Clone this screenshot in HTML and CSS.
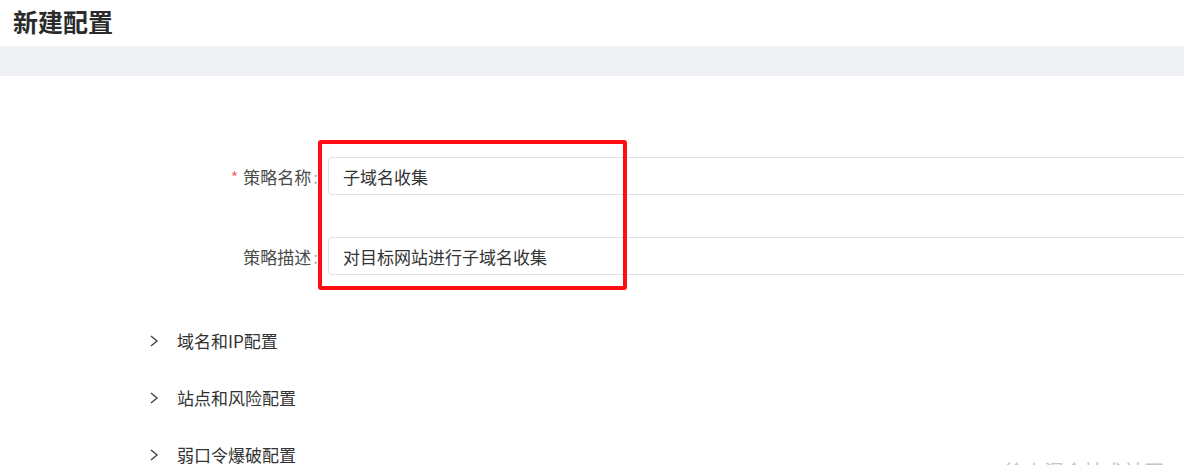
FILE: index.html
```html
<!DOCTYPE html>
<html lang="zh-CN">
<head>
<meta charset="utf-8">
<title>新建配置</title>
<link rel="stylesheet" href="styles.css">
</head>
<body>
<div class="page">
  <header class="header"><h1 class="title">新建配置</h1></header>
  <div class="band"></div>
  <main class="form">
    <div class="row">
      <label class="label"><span class="req">*</span>策略名称<span class="colon">:</span></label>
      <div class="input">子域名收集</div>
    </div>
    <div class="row row-2">
      <label class="label">策略描述<span class="colon">:</span></label>
      <div class="input">对目标网站进行子域名收集</div>
    </div>
    <div class="highlight"></div>
    <ul class="collapse">
      <li class="item"><svg class="chev" width="10" height="14" viewBox="0 0 10 14"><path d="M2 2 L8 7 L2 12" fill="none" stroke="#444" stroke-width="1.4"/></svg><span>域名和IP配置</span></li>
      <li class="item"><svg class="chev" width="10" height="14" viewBox="0 0 10 14"><path d="M2 2 L8 7 L2 12" fill="none" stroke="#444" stroke-width="1.4"/></svg><span>站点和风险配置</span></li>
      <li class="item"><svg class="chev" width="10" height="14" viewBox="0 0 10 14"><path d="M2 2 L8 7 L2 12" fill="none" stroke="#444" stroke-width="1.4"/></svg><span>弱口令爆破配置</span></li>
    </ul>
    <div class="watermark">@徐小湿会技术社区</div>
  </main>
</div>
</body>
</html>
```

FILE: styles.css
```css
html, body {
  margin: 0;
  padding: 0;
  background: #fff;
}
body {
  width: 1184px;
  height: 465px;
  overflow: hidden;
  font-family: "Noto Sans CJK SC", "Liberation Sans", sans-serif;
}
.page {
  width: 1184px;
  height: 465px;
  overflow: hidden;
}
.header {
  height: 46px;
  padding-left: 13px;
}
.title {
  margin: 0;
  font-size: 25px;
  line-height: 42px;
  font-weight: 700;
  color: #2b2b2b;
}
.band {
  height: 30px;
  background: #f0f1f4;
}
.form {
  position: relative;
  padding-top: 81px;
  height: 308px;
}
.row {
  display: flex;
  align-items: center;
  height: 38px;
}
.row-2 {
  margin-top: 42px;
}
.label {
  width: 318px;
  text-align: right;
  font-size: 17px;
  color: #4a4a4a;
  flex-shrink: 0;
}
.req {
  color: #f56c6c;
  margin-right: 5px;
  font-size: 16px;
}
.colon {
  color: #b0b0b0;
  margin-left: 2px;
}
.input {
  margin-left: 10px;
  width: 900px;
  height: 36px;
  border: 1px solid #dcdfe6;
  border-radius: 4px;
  padding-left: 14px;
  display: flex;
  align-items: center;
  font-size: 17px;
  color: #333;
  flex-shrink: 0;
}
.highlight {
  position: absolute;
  left: 318px;
  top: 64px;
  width: 301px;
  height: 142px;
  border: 4px solid #ff0d12;
  border-radius: 3px;
}
.collapse {
  list-style: none;
  margin: 37px 0 0;
  padding: 0;
}
.item {
  height: 57px;
  display: flex;
  align-items: center;
  padding-left: 149px;
  font-size: 17px;
  color: #333;
}
.chev {
  margin-right: 18px;
}
.watermark {
  position: absolute;
  left: 985px;
  top: 381px;
  font-size: 20px;
  color: #c4c4c4;
  white-space: nowrap;
}
```
